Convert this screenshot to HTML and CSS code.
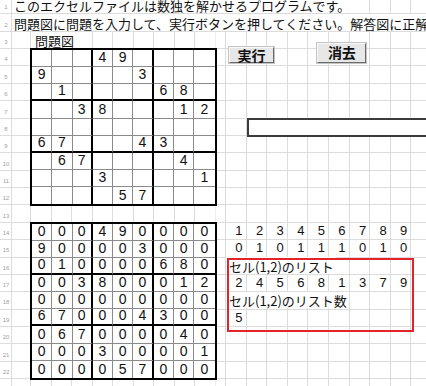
FILE: index.html
```html
<!DOCTYPE html>
<html lang="ja">
<head>
<meta charset="utf-8">
<title>数独</title>
<link rel="stylesheet" href="styles.css">
</head>
<body>
<div class="page">
  <div class="rowhdr">
    <div>1</div><div>2</div><div>3</div><div>4</div><div>5</div><div>6</div><div>7</div><div>8</div>
    <div>9</div><div>10</div><div>11</div><div>12</div><div>13</div><div>14</div><div>15</div><div>16</div>
    <div>17</div><div>18</div><div>19</div><div>20</div><div>21</div><div>22</div><div>23</div>
  </div>
  <div class="sheet">
    <div class="txt t1">このエクセルファイルは数独を解かせるプログラムです。</div>
    <div class="txt t2">問題図に問題を入力して、実行ボタンを押してください。解答図に正解が表示されます。</div>
    <div class="txt t3">問題図</div>

    <div class="btn btn-run">実行</div>
    <div class="btn btn-clear">消去</div>
    <div class="textbox"></div>

    <div class="sudoku upper">
      <div></div><div></div><div></div><div>4</div><div>9</div><div></div><div></div><div></div><div></div>
      <div>9</div><div></div><div></div><div></div><div></div><div>3</div><div></div><div></div><div></div>
      <div></div><div>1</div><div></div><div></div><div></div><div></div><div>6</div><div>8</div><div></div>
      <div></div><div></div><div>3</div><div>8</div><div></div><div></div><div></div><div>1</div><div>2</div>
      <div></div><div></div><div></div><div></div><div></div><div></div><div></div><div></div><div></div>
      <div>6</div><div>7</div><div></div><div></div><div></div><div>4</div><div>3</div><div></div><div></div>
      <div></div><div>6</div><div>7</div><div></div><div></div><div></div><div></div><div>4</div><div></div>
      <div></div><div></div><div></div><div>3</div><div></div><div></div><div></div><div></div><div>1</div>
      <div></div><div></div><div></div><div></div><div>5</div><div>7</div><div></div><div></div><div></div>
    </div>

    <div class="sudoku lower">
      <div>0</div><div>0</div><div>0</div><div>4</div><div>9</div><div>0</div><div>0</div><div>0</div><div>0</div>
      <div>9</div><div>0</div><div>0</div><div>0</div><div>0</div><div>3</div><div>0</div><div>0</div><div>0</div>
      <div>0</div><div>1</div><div>0</div><div>0</div><div>0</div><div>0</div><div>6</div><div>8</div><div>0</div>
      <div>0</div><div>0</div><div>3</div><div>8</div><div>0</div><div>0</div><div>0</div><div>1</div><div>2</div>
      <div>0</div><div>0</div><div>0</div><div>0</div><div>0</div><div>0</div><div>0</div><div>0</div><div>0</div>
      <div>6</div><div>7</div><div>0</div><div>0</div><div>0</div><div>4</div><div>3</div><div>0</div><div>0</div>
      <div>0</div><div>6</div><div>7</div><div>0</div><div>0</div><div>0</div><div>0</div><div>4</div><div>0</div>
      <div>0</div><div>0</div><div>0</div><div>3</div><div>0</div><div>0</div><div>0</div><div>0</div><div>1</div>
      <div>0</div><div>0</div><div>0</div><div>0</div><div>5</div><div>7</div><div>0</div><div>0</div><div>0</div>
    </div>

    <div class="nums n14"><span>1</span><span>2</span><span>3</span><span>4</span><span>5</span><span>6</span><span>7</span><span>8</span><span>9</span></div>
    <div class="nums n15"><span>0</span><span>1</span><span>0</span><span>1</span><span>1</span><span>1</span><span>0</span><span>1</span><span>0</span></div>
    <div class="txt lbl l16">セル(1,2)のリスト</div>
    <div class="nums n17"><span>2</span><span>4</span><span>5</span><span>6</span><span>8</span><span>1</span><span>3</span><span>7</span><span>9</span></div>
    <div class="txt lbl l18">セル(1,2)のリスト数</div>
    <div class="nums n19"><span>5</span></div>

    <div class="redbox"></div>
  </div>
</div>
</body>
</html>
```

FILE: styles.css
```css
html, body {
  margin: 0;
  padding: 0;
  background: #fff;
  overflow: hidden;
  width: 426px;
  height: 386px;
}

.page {
  display: flex;
  margin-top: -3px;
  width: 432px;
  font-family: "Noto Sans CJK JP", "Noto Sans", sans-serif;
  color: #111;
  background:
    linear-gradient(#dcdcdc, #dcdcdc) 11px 0 / 1px 100% no-repeat,
    linear-gradient(#dcdcdc, #dcdcdc) 30px 0 / 1px 100% no-repeat,
    repeating-linear-gradient(to right, transparent 0, transparent 19.5px, #dcdcdc 19.5px, #dcdcdc 20.5px) 31px 0 / 184.5px 100% no-repeat,
    linear-gradient(#dcdcdc, #dcdcdc) 225px 0 / 1px 100% no-repeat,
    repeating-linear-gradient(to right, transparent 0, transparent 19.6px, #dcdcdc 19.6px, #dcdcdc 20.6px) 226px 0 / 206px 100% no-repeat,
    repeating-linear-gradient(to bottom, transparent 0, transparent 16.37px, #dcdcdc 16.37px, #dcdcdc 17.37px);
}

.rowhdr {
  width: 12px;
  flex: none;
  display: flex;
  flex-direction: column;
}
.rowhdr div {
  height: 17.37px;
  box-sizing: border-box;
  font-family: "Liberation Sans", sans-serif;
  font-size: 6px;
  line-height: 7px;
  color: #a0a0a0;
  display: flex;
  align-items: flex-end;
  justify-content: center;
  padding-bottom: 3px;
}

.sheet {
  display: grid;
  grid-template-columns: 19px repeat(9, 20.5px) 10.5px repeat(10, 20.6px);
  grid-template-rows: repeat(23, 17.37px);
}

.txt {
  white-space: nowrap;
  font-size: 13px;
  line-height: 15px;
  background: #fff;
  margin-bottom: 1px;
  justify-self: start;
  display: flex;
  align-items: flex-end;
  padding: 0 2px;
}
.t1 { grid-row: 1; grid-column: 1 / -1; }
.t2 { grid-row: 2; grid-column: 1 / -1; }
.t3 { grid-row: 3; grid-column: 2 / -1; padding-left: 4px; }

.btn {
  box-sizing: border-box;
  align-self: start;
  justify-self: start;
  background: #e7e7e7;
  border: 1px solid;
  border-color: #f8f8f8 #6a6a6a #6a6a6a #f8f8f8;
  box-shadow: 0 0 0 1px #c4c4c4;
  font-size: 14px;
  line-height: 15px;
  font-weight: bold;
  color: #111;
  display: flex;
  align-items: center;
  justify-content: center;
  z-index: 1;
}
.btn-run {
  grid-row: 3 / span 2;
  grid-column: 12 / span 3;
  margin: 15.5px 0 0 3px;
  width: 45px;
  height: 16px;
}
.btn-clear {
  grid-row: 3 / span 2;
  grid-column: 16 / span 3;
  margin: 11.5px 0 0 9px;
  width: 49px;
  height: 19.5px;
}

.textbox {
  grid-row: 8;
  grid-column: 13 / -1;
  box-sizing: border-box;
  margin: -0.5px -10px -1.5px 0.5px;
  border: 2px solid #3c3c3c;
  background: #fff;
}

.sudoku {
  grid-column: 2 / span 9;
  margin: -1px;
  border: 2px solid #000;
  background: #fff;
  display: grid;
  grid-template-columns: repeat(9, 1fr);
  grid-template-rows: repeat(9, 1fr);
  z-index: 1;
}
.upper { grid-row: 4 / span 9; }
.lower { grid-row: 14 / span 9; }
.sudoku div {
  border-right: 1px solid #8a8a8a;
  border-bottom: 1px solid #8a8a8a;
  font-family: "Liberation Sans", sans-serif;
  font-size: 14px;
  line-height: 15px;
  display: flex;
  align-items: flex-end;
  justify-content: center;
  padding-bottom: 1px;
  min-height: 0;
}
.sudoku div:nth-child(3n) { border-right: 2px solid #000; }
.sudoku div:nth-child(9n) { border-right: none; }
.sudoku div:nth-child(n+19):nth-child(-n+27),
.sudoku div:nth-child(n+46):nth-child(-n+54) { border-bottom: 2px solid #000; }
.sudoku div:nth-child(n+73) { border-bottom: none; }

.nums {
  grid-column: 12 / span 9;
  display: grid;
  grid-template-columns: repeat(9, 1fr);
  font-family: "Liberation Sans", sans-serif;
  font-size: 13px;
  line-height: 15px;
}
.nums span {
  display: flex;
  align-items: flex-end;
  justify-content: flex-end;
  padding: 0 4px 2px 0;
}
.n14 { grid-row: 14; }
.n15 { grid-row: 15; }
.n17 { grid-row: 17; }
.n19 { grid-row: 19; }

.lbl { grid-column: 12 / -1; padding-left: 3px; }
.l16 { grid-row: 16; }
.l18 { grid-row: 18; }

.redbox {
  grid-row: 16 / span 4;
  grid-column: 12 / span 9;
  box-sizing: border-box;
  margin: 0.5px -2.5px -5px 1px;
  border: 2px solid #e3242b;
  z-index: 2;
}
```
